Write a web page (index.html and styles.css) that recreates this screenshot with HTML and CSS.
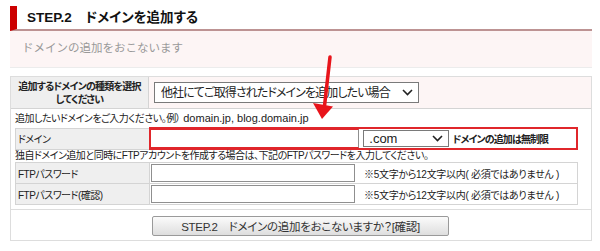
FILE: index.html
```html
<!DOCTYPE html>
<html lang="ja">
<head>
    <meta charset="UTF-8">
    <title>STEP.2 ドメインを追加する</title>
    <link rel="stylesheet" href="styles.css">
</head>
<body>
    <div class="page">
        <h2 class="step-title">STEP.2　ドメインを追加する</h2>
        <p class="step-lead">ドメインの追加をおこないます</p>

        <div class="form-box">
            <table class="type-table">
                <tr>
                    <th>追加するドメインの種類を選択<br>してください</th>
                    <td>
                        <select class="type-select">
                            <option>他社にてご取得されたドメインを追加したい場合</option>
                        </select>
                    </td>
                </tr>
            </table>

            <div class="inner">
                <p class="hint">追加したいドメインをご入力ください。例）<span class="latin"> domain.jp, blog.domain.jp</span></p>
                <table class="entry">
                    <tr>
                        <th>ドメイン</th>
                        <td class="domain-cell">
                            <input type="text" class="domain-input">
                            <select class="tld-select">
                                <option>.com</option>
                            </select>
                            <strong class="unlimited">ドメインの追加は無制限</strong>
                        </td>
                    </tr>
                </table>

                <p class="hint hint-tight">独自ドメイン追加と同時にFTPアカウントを作成する場合は、下記のFTPパスワードを入力してください。</p>
                <table class="entry">
                    <tr>
                        <th>FTPパスワード</th>
                        <td><input type="password" class="ftp-input"><span class="note">※5文字から12文字以内( 必須ではありません )</span></td>
                    </tr>
                    <tr>
                        <th>FTPパスワード(確認)</th>
                        <td><input type="password" class="ftp-input"><span class="note">※5文字から12文字以内( 必須ではありません )</span></td>
                    </tr>
                </table>
            </div>

            <div class="actions">
                <button class="confirm-button">STEP.2　ドメインの追加をおこないますか？[確認]</button>
            </div>
        </div>

        <!-- red pointer drawn over the form -->
        <svg class="pointer" width="600" height="251" viewBox="0 0 600 251">
            <line x1="330" y1="57" x2="324.5" y2="106" stroke="#e8141b" stroke-width="3.5" stroke-linecap="round"/>
            <polygon points="313,103 333,106.5 322,119" fill="#e8141b"/>
        </svg>
    </div>
</body>
</html>
```

FILE: styles.css
```css
:root {
    --red: #cc0000;
    --pink-bg: #fdf5f5;
    --label-bg: #efefef;
    --line: #d4d4d4;
    --text: #222222;
}

body {
    margin: 0;
    font-family: "Liberation Sans", "Noto Sans CJK JP", sans-serif;
    color: var(--text);
    background: #ffffff;
}

.page {
    position: relative;
    width: 582px;
    padding: 6px 0 0 10px;
}

.step-title {
    margin: 0;
    height: 23px;
    line-height: 24px;
    padding-left: 10px;
    border-left: 7px solid var(--red);
    border-bottom: 2px solid #bd9393;
    font-size: 13.5px;
    font-weight: bold;
    color: #111111;
    font-feature-settings: "palt";
}

.step-lead {
    margin: 0;
    height: 36px;
    line-height: 35px;
    padding-left: 12px;
    background-color: var(--pink-bg);
    border-bottom: 1px solid #ececec;
    font-size: 11.5px;
    color: #999999;
}

.form-box {
    margin-top: 8px;
    border: 1px solid #dddddd;
    font-size: 10px;
    letter-spacing: -0.5px;
}

table {
    border-collapse: collapse;
}

.type-table {
    width: 100%;
}

.type-table th {
    width: 137px;
    height: 31px;
    padding: 0;
    background-color: var(--label-bg);
    border-right: 1px solid var(--line);
    border-bottom: 1px solid var(--line);
    font-size: 10px;
    line-height: 13px;
    letter-spacing: -0.8px;
    font-weight: bold;
    text-align: center;
    white-space: nowrap;
    font-feature-settings: "palt";
}

.type-table td {
    padding: 0 0 0 5px;
    background-color: var(--pink-bg);
    border-bottom: 1px solid var(--line);
}

select {
    -webkit-appearance: none;
    appearance: none;
    border: 1px solid #7a7a7a;
    border-radius: 0;
    background-color: #ffffff;
    background-image: url("data:image/svg+xml;charset=utf-8,%3Csvg xmlns='http://www.w3.org/2000/svg' width='11' height='7' viewBox='0 0 11 7'%3E%3Cpolyline points='1 1 5.5 5.5 10 1' fill='none' stroke='%23222' stroke-width='1.6'/%3E%3C/svg%3E");
    background-repeat: no-repeat;
    background-position: right 5px center;
    font-family: "Liberation Sans", "Noto Sans CJK JP", sans-serif;
    color: var(--text);
    margin: 0;
}

.type-select {
    display: block;
    width: 265px;
    height: 21px;
    padding: 0 0 0 6px;
    font-size: 12px;
    letter-spacing: -0.9px;
    font-feature-settings: "palt";
}

.inner {
    width: 563px;
    margin-left: 4px;
}

.hint {
    margin: 0;
    height: 18px;
    line-height: 19px;
    font-feature-settings: "palt";
}

.hint-tight {
    height: 12px;
    line-height: 12px;
}

.latin {
    font-size: 11px;
    letter-spacing: 0;
}

.entry {
    width: 100%;
    border: 1px solid var(--line);
}

.entry th {
    width: 131px;
    padding: 0 0 0 2px;
    background-color: var(--label-bg);
    border: 1px solid var(--line);
    text-align: left;
    font-weight: normal;
    white-space: nowrap;
    font-feature-settings: "palt";
}

.entry td {
    height: 20px;
    padding: 0;
    border: 1px solid var(--line);
    white-space: nowrap;
}

.entry .domain-cell {
    height: 17px;
    border: 2px solid #e0262b;
    padding: 0;
}

input {
    margin: 0;
    border: 1px solid #8f8f8f;
    border-radius: 0;
    background: #ffffff;
    vertical-align: middle;
}

.domain-input {
    width: 207px;
    height: 17px;
    padding: 0;
    border-top-color: #e0262b;
    border-left: none;
    border-bottom-color: #e0262b;
}

.tld-select {
    width: 86px;
    height: 17px;
    margin-left: 2px;
    padding: 0 0 0 5px;
    font-size: 13px;
    letter-spacing: 0;
    vertical-align: middle;
}

.unlimited {
    margin-left: 1px;
    font-weight: bold;
    letter-spacing: -0.9px;
    font-feature-settings: "palt";
    vertical-align: middle;
}

.ftp-input {
    width: 202px;
    height: 16px;
    padding: 0;
    margin-left: 1px;
}

.note {
    margin-left: 9px;
    letter-spacing: -0.3px;
    vertical-align: middle;
    font-feature-settings: "palt";
}

.actions {
    margin-top: 4px;
    padding: 6px 0 4px 141px;
    border-top: 1px solid #dddddd;
}

.confirm-button {
    display: block;
    width: 297px;
    height: 20px;
    padding: 0;
    border: 1px solid #9a9a9a;
    border-radius: 2px;
    background: linear-gradient(#fbfbfb, #dedede);
    font-family: "Liberation Sans", "Noto Sans CJK JP", sans-serif;
    font-size: 11.5px;
    letter-spacing: -0.3px;
    color: #333333;
    font-feature-settings: "palt";
}

.pointer {
    position: absolute;
    top: 0;
    left: 0;
    pointer-events: none;
}
```
